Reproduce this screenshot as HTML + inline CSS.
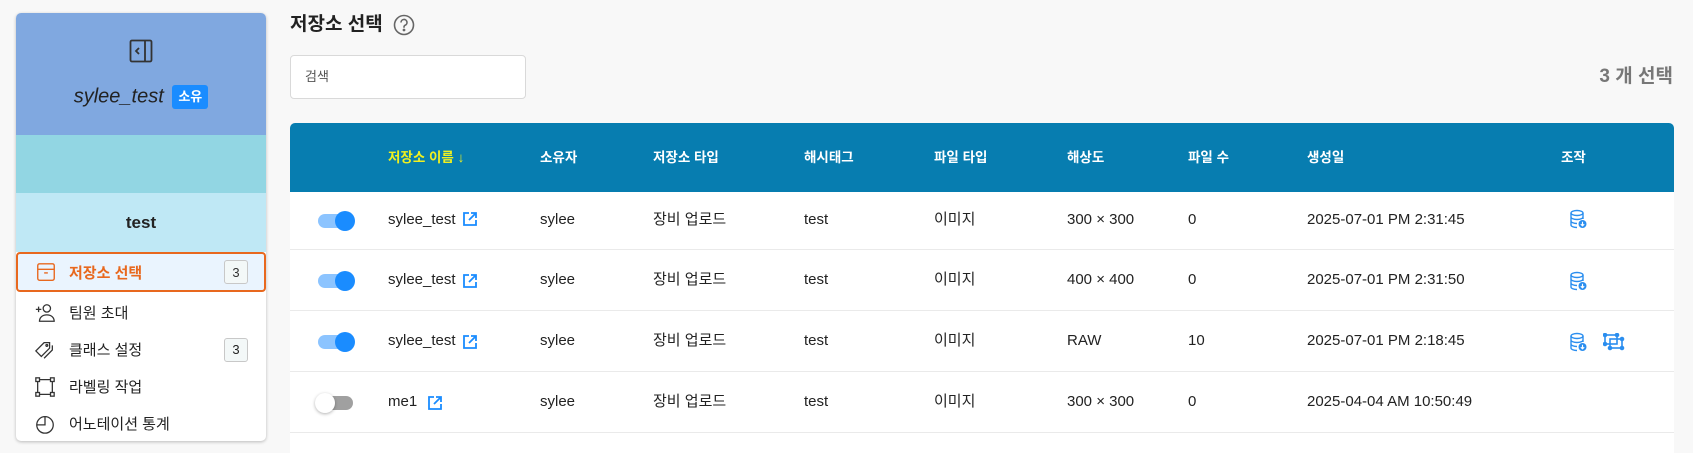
<!DOCTYPE html>
<html><head><meta charset="utf-8"><style>
*{box-sizing:border-box;margin:0;padding:0}
body{width:1693px;height:453px;background:#f8f8f8;font-family:"Liberation Sans","Noto Sans CJK KR",sans-serif;color:#222;position:relative;overflow:hidden}
.abs{position:absolute}
.side{left:16px;top:13px;width:250px;height:428px;background:#fff;border-radius:5px;box-shadow:0 1px 3px rgba(0,0,0,.25);overflow:hidden}
.item{position:absolute;left:0;width:250px;height:37px;display:flex;align-items:center;font-size:15px}
.item svg{position:absolute;left:18px}
.item span{position:absolute;left:53px}
.badge{position:absolute;left:208px;width:24px;height:24px;border:1px solid #c8c8c8;border-radius:3px;font-size:13px;display:flex;align-items:center;justify-content:center;background:#f3f8f8}
.th{position:absolute;top:0;height:69px;line-height:69px;color:#fff;font-weight:bold;font-size:13.5px}
.row{position:absolute;left:0;width:1384px;height:61px;border-bottom:1.5px solid #eaeaea;font-size:15px}
.row div{position:absolute;top:0;line-height:60px}
.tg{position:absolute;left:28px;top:24px;width:35px;height:14px;border-radius:7px}
.kn{position:absolute;top:21px;width:20px;height:20px;border-radius:50%}
</style></head><body>
<div class="abs side">
 <div class="abs" style="left:0;top:0;width:250px;height:122px;background:#80a8e0"></div>
 <svg class="abs" style="left:113px;top:26px" width="24" height="24" viewBox="0 0 24 24" fill="none" stroke="#333" stroke-width="1.8"><rect x="1.5" y="1.5" width="21" height="21" rx="1.5"/><line x1="16" y1="1.5" x2="16" y2="22.5"/><path d="M10 9l-3 3 3 3"/></svg>
 <div class="abs" style="left:0;top:71px;width:250px;text-align:center;line-height:24px;font-size:20px;font-style:italic"><span style="vertical-align:middle">sylee_test</span> <span style="display:inline-block;vertical-align:middle;background:#1a8cff;color:#fff;font-size:13px;font-style:normal;font-weight:bold;border-radius:3px;padding:0 6px;line-height:24px;margin-left:3px">소유</span></div>
 <div class="abs" style="left:0;top:122px;width:250px;height:58px;background:#92d6e3"></div>
 <div class="abs" style="left:0;top:180px;width:250px;height:59px;background:#bfe8f5;text-align:center;line-height:59px;font-weight:bold;font-size:17px">test</div>
 <div class="item" style="top:239px;height:40px;background:#eaf4fe;border:2px solid #e8681e;border-radius:4px;color:#e8681e;font-weight:bold">
  <svg width="22" height="22" viewBox="0 0 24 24" fill="none" stroke="#e8681e" stroke-width="1.5" style="left:17px"><rect x="3" y="3" width="18" height="18" rx="2"/><line x1="3" y1="9" x2="21" y2="9"/><line x1="10" y1="13" x2="14" y2="13"/></svg>
  <span style="left:51px">저장소 선택</span><div class="badge" style="left:206px;color:#333;font-weight:normal">3</div></div>
 <div class="item" style="top:281px"><svg width="22" height="22" viewBox="0 0 24 24" fill="none" stroke="#333" stroke-width="1.4"><circle cx="14" cy="7" r="4"/><path d="M6 21c0-4 3-7 8-7s8 3 8 7z"/><path d="M2 8h6M5 5v6"/></svg><span>팀원 초대</span></div>
 <div class="item" style="top:318px"><svg width="22" height="22" viewBox="0 0 24 24" fill="none" stroke="#333" stroke-width="1.4"><path d="M2 13l9-9h6v6l-9 9z"/><circle cx="14" cy="7" r="1"/><path d="M20 7v5l-9 9"/></svg><span>클래스 설정</span><div class="badge">3</div></div>
 <div class="item" style="top:355px"><svg width="22" height="22" viewBox="0 0 24 24" fill="none" stroke="#333" stroke-width="1.4"><rect x="2" y="2" width="4" height="4"/><rect x="18" y="2" width="4" height="4"/><rect x="2" y="18" width="4" height="4"/><rect x="18" y="18" width="4" height="4"/><path d="M6 4h12M6 20h12M4 6v12M20 6v12"/></svg><span>라벨링 작업</span></div>
 <div class="item" style="top:392px"><svg width="22" height="22" viewBox="0 0 24 24" fill="none" stroke="#333" stroke-width="1.4"><circle cx="12" cy="13" r="9"/><path d="M12 4v9H3"/></svg><span>어노테이션 통계</span></div>
</div>

<div class="abs" style="left:290px;top:12px;font-size:19px;font-weight:bold;line-height:26px">저장소 선택</div>
<svg class="abs" style="left:393px;top:14px" width="22" height="22" viewBox="0 0 22 22" fill="none" stroke="#666" stroke-width="1.6"><circle cx="11" cy="11" r="9.5"/><path d="M8 8.5a3 3 0 1 1 4 2.8c-.8.4-1 1-1 1.7v.8"/><circle cx="11" cy="16" r=".6" fill="#666"/></svg>
<div class="abs" style="left:290px;top:55px;width:236px;height:44px;background:#fff;border:1px solid #d9d9d9;border-radius:4px;font-size:13px;color:#555;line-height:42px;padding-left:14px">검색</div>
<div class="abs" style="right:20px;top:64px;font-size:19px;font-weight:bold;color:#777;line-height:26px">3 개 선택</div>

<div class="abs" style="left:290px;top:123px;width:1384px;height:330px;background:#fff;border-radius:5px 5px 0 0;overflow:hidden">
 <div class="abs" style="left:0;top:0;width:1384px;height:69px;background:#077db0"></div>
 <div class="th" style="left:98px;color:#f0f020">저장소 이름 <span style="font-weight:normal">↓</span></div>
 <div class="th" style="left:250px">소유자</div>
 <div class="th" style="left:363px">저장소 타입</div>
 <div class="th" style="left:514px">해시태그</div>
 <div class="th" style="left:644px">파일 타입</div>
 <div class="th" style="left:777px">해상도</div>
 <div class="th" style="left:898px">파일 수</div>
 <div class="th" style="left:1017px">생성일</div>
 <div class="th" style="left:1271px">조작</div>

 <div class="row" style="top:69px;height:58px"><span class="tg" style="background:#8cc4ff;top:22px"></span><span class="kn" style="left:45px;top:19px;background:#1a8cff"></span>
 <div style="left:98px;line-height:56px">sylee_test</div><div style="left:250px;line-height:56px">sylee</div><div style="left:363px;line-height:56px">장비 업로드</div><div style="left:514px;line-height:56px">test</div><div style="left:644px;line-height:56px">이미지</div><div style="left:777px;line-height:56px">300 × 300</div><div style="left:898px;line-height:56px">0</div><div style="left:1017px;line-height:56px">2025-07-01 PM 2:31:45</div></div>
 <div class="row" style="top:127px"><span class="tg" style="background:#8cc4ff"></span><span class="kn" style="left:45px;background:#1a8cff"></span>
 <div style="left:98px">sylee_test</div><div style="left:250px">sylee</div><div style="left:363px">장비 업로드</div><div style="left:514px">test</div><div style="left:644px">이미지</div><div style="left:777px">400 × 400</div><div style="left:898px">0</div><div style="left:1017px">2025-07-01 PM 2:31:50</div></div>
 <div class="row" style="top:188px"><span class="tg" style="background:#8cc4ff"></span><span class="kn" style="left:45px;background:#1a8cff"></span>
 <div style="left:98px">sylee_test</div><div style="left:250px">sylee</div><div style="left:363px">장비 업로드</div><div style="left:514px">test</div><div style="left:644px">이미지</div><div style="left:777px">RAW</div><div style="left:898px">10</div><div style="left:1017px">2025-07-01 PM 2:18:45</div></div>
 <div class="row" style="top:249px"><span class="tg" style="background:#a0a0a0"></span><span class="kn" style="left:25px;background:#fff;box-shadow:0 1px 3px rgba(0,0,0,.3)"></span>
 <div style="left:98px">me1</div><div style="left:250px">sylee</div><div style="left:363px">장비 업로드</div><div style="left:514px">test</div><div style="left:644px">이미지</div><div style="left:777px">300 × 300</div><div style="left:898px">0</div><div style="left:1017px">2025-04-04 AM 10:50:49</div></div>
</div>

<svg width="0" height="0" style="position:absolute"><defs>
<symbol id="lk" viewBox="0 0 16 16"><path d="M7 2H2v12h12V9" fill="none" stroke="#1a8cff" stroke-width="1.8"/><path d="M7 9l7-7M9 2h5v5" fill="none" stroke="#1a8cff" stroke-width="1.8"/></symbol>
<symbol id="db" viewBox="0 0 18 20"><ellipse cx="8" cy="4" rx="6" ry="2.5" fill="none" stroke="#2b8eef" stroke-width="1.4"/><path d="M2 4v12c0 1.4 2.7 2.5 6 2.5M14 4v6M2 8c0 1.4 2.7 2.5 6 2.5s6-1.1 6-2.5M2 12c0 1.4 2.7 2.5 6 2.5" fill="none" stroke="#2b8eef" stroke-width="1.4"/><circle cx="13.5" cy="15" r="4" fill="#2b8eef"/><path d="M13.5 12.7v4M11.8 15.2l1.7 1.7 1.7-1.7" stroke="#fff" stroke-width="1.1" fill="none"/></symbol>
</defs></svg>
<svg class="abs" style="left:462px;top:211px" width="16" height="16"><use href="#lk"/></svg>
<svg class="abs" style="left:462px;top:273px" width="16" height="16"><use href="#lk"/></svg>
<svg class="abs" style="left:462px;top:334px" width="16" height="16"><use href="#lk"/></svg>
<svg class="abs" style="left:427px;top:395px" width="16" height="16"><use href="#lk"/></svg>
<svg class="abs" style="left:1569px;top:209px" width="18" height="20"><use href="#db"/></svg>
<svg class="abs" style="left:1569px;top:271px" width="18" height="20"><use href="#db"/></svg>
<svg class="abs" style="left:1569px;top:332px" width="18" height="20"><use href="#db"/></svg>
<svg class="abs" style="left:1603px;top:333px" width="22" height="18" viewBox="0 0 22 18" fill="none" stroke="#2b8eef" stroke-width="1.6"><rect x="2" y="2" width="12" height="9"/><rect x="7" y="6" width="12" height="9"/><g fill="#2b8eef"><circle cx="2" cy="2" r="1.5"/><circle cx="14" cy="2" r="1.5"/><circle cx="2" cy="11" r="1.5"/><circle cx="19" cy="6" r="1.5"/><circle cx="7" cy="15" r="1.5"/><circle cx="19" cy="15" r="1.5"/></g></svg>
</body></html>
